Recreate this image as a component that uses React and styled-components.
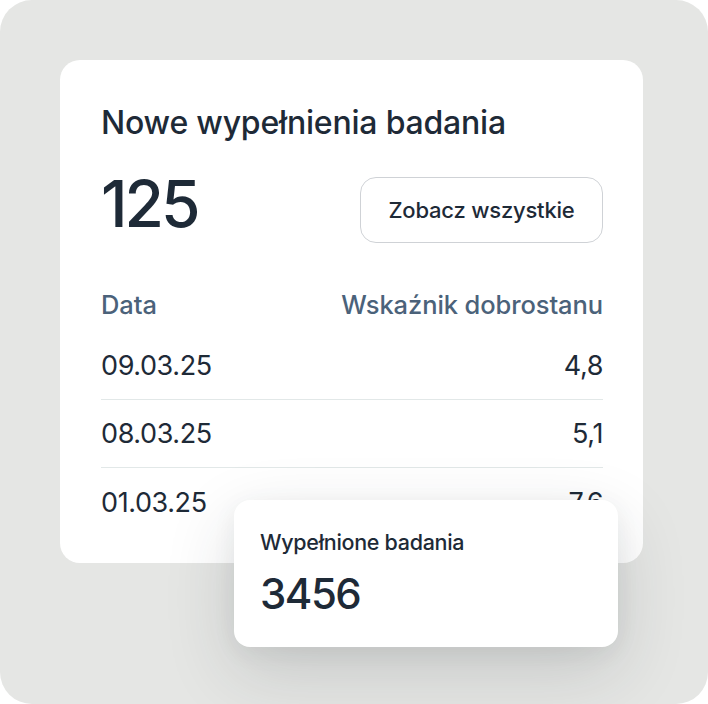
import React from "react";
import styled, { createGlobalStyle } from "styled-components";

const Global = createGlobalStyle`
  html, body { margin: 0; padding: 0; background: #ffffff; }
  body { font-family: Inter, "Noto Sans", sans-serif; -webkit-font-smoothing: antialiased; }
`;

const Stage = styled.div`
  position: relative;
  width: 708px;
  height: 704px;
  box-sizing: border-box;
  background: #e5e6e4;
  border-radius: 32px;
  padding: 60px 65px 0 60px;
  overflow: hidden;
`;

const Card = styled.section`
  width: 583px;
  height: 503px;
  box-sizing: border-box;
  background: #ffffff;
  border-radius: 20px;
  padding: 44px 40px 0 41px;
  overflow: hidden;
  color: #1e2a37;
`;

const Title = styled.h2`
  margin: 0;
  font-size: 32px;
  font-weight: 500;
  letter-spacing: -0.2px;
  line-height: 38px;
`;

const TopRow = styled.div`
  display: flex;
  align-items: center;
  justify-content: space-between;
  margin-top: 30px;
`;

const BigNumber = styled.div`
  font-size: ${(p) => p.$size}px;
  font-weight: 500;
  letter-spacing: ${(p) => p.$track}px;
  line-height: 1;
  color: #1e2a37;
`;

const Count = styled(BigNumber)`
  margin-bottom: 12px;
`;

const Button = styled.button`
  width: 243px;
  height: 66px;
  border: 1.5px solid #cfd2d6;
  border-radius: 16px;
  background: #ffffff;
  font-family: inherit;
  font-size: 22px;
  font-weight: 500;
  letter-spacing: -0.2px;
  color: #1e2a37;
  cursor: pointer;
`;

const Table = styled.div`
  margin-top: 41px;
  display: flex;
  flex-direction: column;
`;

const HeadRow = styled.div`
  display: flex;
  justify-content: space-between;
  align-items: center;
  height: 30px;
  margin-bottom: 13px;
  font-size: 25.5px;
  font-weight: 500;
  letter-spacing: -0.1px;
  color: #4b627a;
`;

const Row = styled.div`
  display: flex;
  justify-content: space-between;
  align-items: center;
  height: 68px;
  box-sizing: border-box;
  font-size: 27px;
  font-weight: 400;
  letter-spacing: -0.4px;
  color: #1e2a37;
  border-bottom: ${(p) => (p.$last ? "none" : "1.5px solid #e2e8e8")};
`;

const Floating = styled.div`
  position: absolute;
  left: 234px;
  top: 500px;
  width: 384px;
  height: 147px;
  box-sizing: border-box;
  padding: 30px 26px;
  background: #ffffff;
  border-radius: 16px;
  box-shadow: 0 24px 70px rgba(40, 45, 50, 0.16), 0 6px 24px rgba(40, 45, 50, 0.06);
  color: #1e2a37;
`;

const FloatLabel = styled.div`
  font-size: 21.5px;
  font-weight: 500;
  letter-spacing: -0.3px;
  line-height: 24px;
`;

const FloatValue = styled(BigNumber)`
  margin-top: 19px;
`;

const rows = [
  ["09.03.25", "4,8"],
  ["08.03.25", "5,1"],
  ["01.03.25", "7,6"],
];

export default function App() {
  return (
    <>
      <Global />
      <Stage>
        <Card>
          <Title>Nowe wypełnienia badania</Title>
          <TopRow>
            <Count $size={64} $track={-3}>125</Count>
            <Button>Zobacz wszystkie</Button>
          </TopRow>
          <Table>
            <HeadRow>
              <span>Data</span>
              <span>Wskaźnik dobrostanu</span>
            </HeadRow>
            {rows.map(([d, v], i) => (
              <Row key={d} $last={i === rows.length - 1}>
                <span>{d}</span>
                <span>{v}</span>
              </Row>
            ))}
          </Table>
        </Card>
        <Floating>
          <FloatLabel>Wypełnione badania</FloatLabel>
          <FloatValue $size={42} $track={-1.5}>3456</FloatValue>
        </Floating>
      </Stage>
    </>
  );
}
